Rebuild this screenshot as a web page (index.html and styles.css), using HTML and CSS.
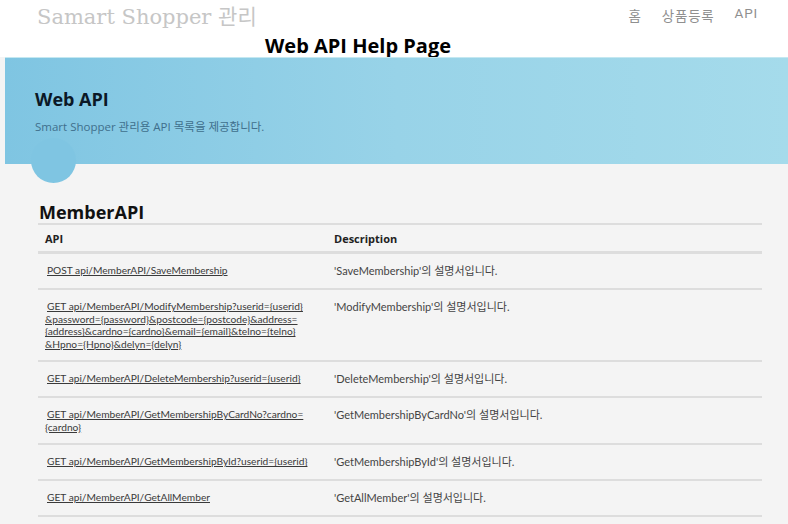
FILE: index.html
```html
<!doctype html>
<html lang="ko">
  <head>
    <meta charset="UTF-8" />
    <meta name="viewport" content="width=device-width, initial-scale=1.0" />
    <title>Web API Help Page</title>
    <link rel="stylesheet" href="styles.css">
  </head>
  <body>
    <header class="site-header">
      <div class="brand">Samart Shopper 관리</div>
      <nav class="site-nav">
        <a href="#">홈</a>
        <a href="#">상품등록</a>
        <a href="#">API</a>
      </nav>
    </header>
    <h1 class="page-title">Web API Help Page</h1>

    <section class="featured">
      <h2>Web API</h2>
      <p>Smart Shopper 관리용 API 목록을 제공합니다.</p>
    </section>

    <main class="content">
      <h2>MemberAPI</h2>
      <table class="api-table">
        <thead>
          <tr>
            <th class="api-name">API</th>
            <th class="api-doc">Description</th>
          </tr>
        </thead>
        <tbody>
          <tr>
            <td class="api-name"><a href="#">POST api/MemberAPI/SaveMembership</a></td>
            <td class="api-doc">'SaveMembership'의 설명서입니다.</td>
          </tr>
          <tr>
            <td class="api-name"><a href="#">GET api/MemberAPI/ModifyMembership?userid={userid}<wbr>&amp;password={password}&amp;postcode={postcode}&amp;address=<wbr>{address}&amp;cardno={cardno}&amp;email={email}&amp;telno={telno}<wbr>&amp;Hpno={Hpno}&amp;delyn={delyn}</a></td>
            <td class="api-doc">'ModifyMembership'의 설명서입니다.</td>
          </tr>
          <tr>
            <td class="api-name"><a href="#">GET api/MemberAPI/DeleteMembership?userid={userid}</a></td>
            <td class="api-doc">'DeleteMembership'의 설명서입니다.</td>
          </tr>
          <tr>
            <td class="api-name"><a href="#">GET api/MemberAPI/GetMembershipByCardNo?cardno=<wbr>{cardno}</a></td>
            <td class="api-doc">'GetMembershipByCardNo'의 설명서입니다.</td>
          </tr>
          <tr>
            <td class="api-name"><a href="#">GET api/MemberAPI/GetMembershipById?userid={userid}</a></td>
            <td class="api-doc">'GetMembershipById'의 설명서입니다.</td>
          </tr>
          <tr>
            <td class="api-name"><a href="#">GET api/MemberAPI/GetAllMember</a></td>
            <td class="api-doc">'GetAllMember'의 설명서입니다.</td>
          </tr>
        </tbody>
      </table>
    </main>
  </body>
</html>
```

FILE: styles.css
```css
html,
body {
  margin: 0;
  padding: 0;
  background: #f4f4f4;
}

body {
  font-family: "Open Sans", "Noto Sans CJK KR", sans-serif;
  color: #333;
}

.site-header {
  background: #fff;
  display: flex;
  justify-content: space-between;
  align-items: flex-start;
  padding: 3px 30px 0 37px;
  height: 31px;
}

.brand {
  font-family: "DejaVu Serif", "Noto Sans CJK KR", serif;
  font-size: 21px;
  color: #c6c6c6;
  line-height: 28px;
}

.site-nav {
  display: flex;
  gap: 20px;
  padding-top: 2px;
}

.site-nav a {
  font-family: "Roboto", "Noto Sans CJK KR", sans-serif;
  font-size: 13.5px;
  letter-spacing: 0.8px;
  color: #8f8f8f;
  text-decoration: none;
}

.page-title {
  background: #fff;
  margin: 0;
  padding: 0 0 0 265px;
  height: 23px;
  font-size: 20px;
  line-height: 23px;
  color: #000;
  font-weight: 700;
}

.featured {
  position: relative;
  margin-left: 5px;
  height: 107px;
  box-sizing: border-box;
  padding: 29px 30px 0;
  background: linear-gradient(to right, #7fc5e2, #98d3e8 50%, #a5dbeb);
  border-top: 1px solid #c4e8f1;
}

.featured::after {
  content: "";
  position: absolute;
  left: 26px;
  bottom: -19px;
  width: 45px;
  height: 45px;
  border-radius: 50%;
  background: #7fc5e2;
}

.featured h2 {
  margin: 0;
  font-size: 18px;
  line-height: 24px;
  color: #0b1826;
}

.featured p {
  margin: 7px 0 0;
  font-size: 11.5px;
  color: #3f6f8c;
}

.content {
  padding: 38px 26px 0 38px;
}

.content h2 {
  margin: 0 0 0 1px;
  font-size: 18px;
  line-height: 21px;
  color: #111;
}

.api-table {
  width: 100%;
  table-layout: fixed;
  border-collapse: collapse;
  font-family: "Lato", "Noto Sans CJK KR", sans-serif;
  font-size: 11px;
  border-top: 2px solid #ddd;
}

.api-table th {
  text-align: left;
  font-family: "Open Sans", "Noto Sans CJK KR", sans-serif;
  font-size: 11px;
  line-height: 14px;
  font-weight: 700;
  color: #222;
  padding: 7px 6px 5px;
  border-bottom: 3px solid #ddd;
}

.api-table td {
  vertical-align: top;
  padding: 10px 6px;
  line-height: 14px;
  border-bottom: 2px solid #ddd;
}

.api-table .api-name {
  width: 265px;
  padding-left: 7px;
  padding-right: 18px;
}

.api-table td.api-name {
  font-size: 10.2px;
  line-height: 12.5px;
  text-indent: 2px;
}

.api-name a {
  color: #3a3a3a;
  text-decoration: underline;
}

.api-doc {
  color: #444;
}
```
